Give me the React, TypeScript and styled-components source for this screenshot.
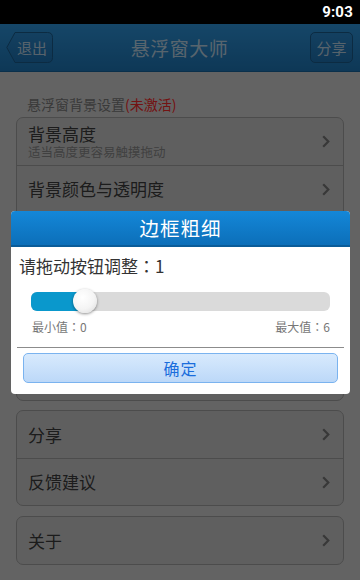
import React from "react";
import styled, { createGlobalStyle } from "styled-components";

const GlobalStyle = createGlobalStyle`
  html, body { margin: 0; padding: 0; }
  body {
    font-family: "Noto Sans CJK SC", "Noto Sans", "Liberation Sans", sans-serif;
    -webkit-font-smoothing: antialiased;
  }
  * { box-sizing: border-box; }
`;

const Screen = styled.div`
  position: relative;
  width: 360px;
  height: 580px;
  overflow: hidden;
  background: #dcdcdc;
  display: flex;
  flex-direction: column;
`;

const StatusBar = styled.div`
  height: 24px;
  background: #000;
  display: flex;
  align-items: center;
  justify-content: flex-end;
  padding-right: 7px;
  flex-shrink: 0;
`;

const Clock = styled.span`
  font-family: Roboto, "Liberation Sans", sans-serif;
  font-weight: 700;
  font-size: 15px;
  color: #fff;
  letter-spacing: 0.2px;
`;

const AppArea = styled.div`
  position: relative;
  flex: 1;
  display: flex;
  flex-direction: column;
`;

const Header = styled.div`
  height: 48px;
  flex-shrink: 0;
  background: linear-gradient(#309ce6, #207cc0);
  border-bottom: 1px solid #1a6aa6;
  display: grid;
  grid-template-columns: 1fr auto 1fr;
  align-items: center;
  padding: 0 7px 0 6px;
`;

const Title = styled.div`
  font-size: 19px;
  color: rgba(255, 255, 255, 0.74);
  letter-spacing: 0.5px;
`;

const BackButton = styled.div`
  position: relative;
  justify-self: start;
  width: 47px;
  height: 31px;
  display: flex;
  align-items: center;
  justify-content: flex-end;
  padding-right: 6px;
  font-size: 15px;
  color: rgba(255, 255, 255, 0.74);
`;

const BackShape = styled.svg`
  position: absolute;
  inset: 0;
`;

const BackLabel = styled.span`
  position: relative;
`;

const ShareButton = styled.div`
  justify-self: end;
  width: 43px;
  height: 31px;
  border-radius: 5px;
  background: linear-gradient(#2c8fd6, #2078bb);
  border: 1px solid #1b5f92;
  display: flex;
  align-items: center;
  justify-content: center;
  font-size: 15px;
  color: rgba(255, 255, 255, 0.74);
`;

const Content = styled.div`
  display: flex;
  flex-direction: column;
  padding: 0 16px;
`;

const SectionLabel = styled.div`
  margin: 22px 0 3px 11px;
  line-height: 20px;
  font-size: 14px;
  color: #808080;
`;

const Warn = styled.span`
  color: #ff2a2a;
`;

const Card = styled.div<{ $gap?: number }>`
  border: 1px solid #a9a9a9;
  border-radius: 7px;
  background: #d3d3d3;
  margin-top: ${(p) => p.$gap ?? 0}px;
  display: flex;
  flex-direction: column;
  overflow: hidden;
`;

const Row = styled.div`
  height: 47px;
  flex-shrink: 0;
  display: flex;
  align-items: center;
  justify-content: space-between;
  padding: 0 13px 0 11px;
  & + & {
    border-top: 1px solid #a9a9a9;
  }
`;

const RowText = styled.div`
  display: flex;
  flex-direction: column;
`;

const RowTitle = styled.div`
  font-size: 17px;
  line-height: 20px;
  color: #3e3e3e;
`;

const RowSub = styled.div`
  font-size: 12.5px;
  line-height: 15px;
  color: #8e8e8e;
`;

const Overlay = styled.div`
  position: absolute;
  inset: 0;
  background: rgba(0, 0, 0, 0.55);
  display: flex;
  align-items: center;
  justify-content: center;
`;

const Dialog = styled.div`
  width: 339px;
  margin-left: 1px;
  background: #fff;
  border-radius: 4px;
  overflow: hidden;
  display: flex;
  flex-direction: column;
  padding-bottom: 11px;
`;

const DialogHeader = styled.div`
  height: 36px;
  background: linear-gradient(#1487d8, #0c6fb9);
  border-bottom: 2px solid #0a5c99;
  display: flex;
  align-items: center;
  justify-content: center;
  font-size: 19.5px;
  color: #fff;
  letter-spacing: 1px;
`;

const DialogBody = styled.div`
  display: flex;
  flex-direction: column;
  padding: 0 6px;
`;

const Prompt = styled.div`
  margin-top: 9px;
  padding-left: 2px;
  line-height: 20px;
  font-size: 17px;
  color: #333;
`;

const Colon = styled.span`
  font-family: "Noto Sans CJK TC", "Noto Sans CJK SC", sans-serif;
`;

const SliderBox = styled.div`
  position: relative;
  margin: 16px 14px 0;
  height: 19px;
`;

const Track = styled.div`
  height: 19px;
  border-radius: 6px;
  background: #dadada;
  overflow: hidden;
`;

const Fill = styled.div`
  height: 100%;
  background: #0a98cc;
`;

const Thumb = styled.div`
  position: absolute;
  top: 50%;
  width: 24px;
  height: 24px;
  margin: -12px 0 0 -12px;
  border-radius: 50%;
  background: radial-gradient(circle at 40% 35%, #ffffff 0%, #f4f4f4 55%, #d8d8d8 100%);
  box-shadow: 0 1px 3px rgba(0, 0, 0, 0.45);
`;

const Limits = styled.div`
  margin: 8px 14px 0 15px;
  display: flex;
  justify-content: space-between;
  line-height: 16px;
  font-size: 12px;
  color: #777;
`;

const Divider = styled.div`
  margin-top: 12px;
  height: 1px;
  background: #8c8c8c;
`;

const ConfirmButton = styled.div`
  margin: 5px 6px 0;
  height: 30px;
  border: 1px solid #7ab3ef;
  border-radius: 5px;
  background: linear-gradient(#d8eafd, #bcd8f8);
  display: flex;
  align-items: center;
  justify-content: center;
  font-size: 16px;
  color: #1a6ddc;
  letter-spacing: 1px;
`;

const Chevron = () => (
  <svg width="8" height="13" viewBox="0 0 8 13">
    <path d="M1.2 1.2 L6.3 6.5 L1.2 11.8" fill="none" stroke="#7c7c7c" strokeWidth="2.2" />
  </svg>
);

type Item = { title: string; sub?: string };

const bgItems: Item[] = [
  { title: "背景高度", sub: "适当高度更容易触摸拖动" },
  { title: "背景颜色与透明度" },
  { title: "边框粗细" },
  { title: "边框颜色" },
  { title: "圆角大小" },
  { title: "图标大小" },
];

const ListCard = ({ items, gap }: { items: Item[]; gap?: number }) => (
  <Card $gap={gap}>
    {items.map((it) => (
      <Row key={it.title}>
        <RowText>
          <RowTitle>{it.title}</RowTitle>
          {it.sub && <RowSub>{it.sub}</RowSub>}
        </RowText>
        <Chevron />
      </Row>
    ))}
  </Card>
);

export default function App() {
  const value = 1;
  const min = 0;
  const max = 6;
  const frac = (value - min) / (max - min);
  const pos = `calc(6px + ${frac} * (100% - 12px))`;
  return (
    <>
      <GlobalStyle />
      <Screen>
        <StatusBar>
          <Clock>9:03</Clock>
        </StatusBar>
        <AppArea>
          <Header>
            <BackButton>
              <BackShape width="47" height="31" viewBox="0 0 47 31">
                <defs>
                  <linearGradient id="bk" x1="0" y1="0" x2="0" y2="1">
                    <stop offset="0" stopColor="#2c8fd6" />
                    <stop offset="1" stopColor="#2078bb" />
                  </linearGradient>
                </defs>
                <path
                  d="M9 0.5 H41.5 Q46.5 0.5 46.5 5.5 V25.5 Q46.5 30.5 41.5 30.5 H9 L0.8 15.5 Z"
                  fill="url(#bk)"
                  stroke="#1b5f92"
                  strokeWidth="1"
                />
              </BackShape>
              <BackLabel>退出</BackLabel>
            </BackButton>
            <Title>悬浮窗大师</Title>
            <ShareButton>分享</ShareButton>
          </Header>
          <Content>
            <SectionLabel>
              悬浮窗背景设置<Warn>(未激活)</Warn>
            </SectionLabel>
            <ListCard items={bgItems} />
            <ListCard gap={9} items={[{ title: "分享" }, { title: "反馈建议" }]} />
            <ListCard gap={10} items={[{ title: "关于" }]} />
          </Content>
          <Overlay>
            <Dialog>
              <DialogHeader>边框粗细</DialogHeader>
              <DialogBody>
                <Prompt>
                  请拖动按钮调整<Colon>：</Colon>
                  {value}
                </Prompt>
                <SliderBox>
                  <Track>
                    <Fill style={{ width: pos }} />
                  </Track>
                  <Thumb style={{ left: pos }} />
                </SliderBox>
                <Limits>
                  <span>
                    最小值<Colon>：</Colon>
                    {min}
                  </span>
                  <span>
                    最大值<Colon>：</Colon>
                    {max}
                  </span>
                </Limits>
                <Divider />
                <ConfirmButton>确定</ConfirmButton>
              </DialogBody>
            </Dialog>
          </Overlay>
        </AppArea>
      </Screen>
    </>
  );
}
